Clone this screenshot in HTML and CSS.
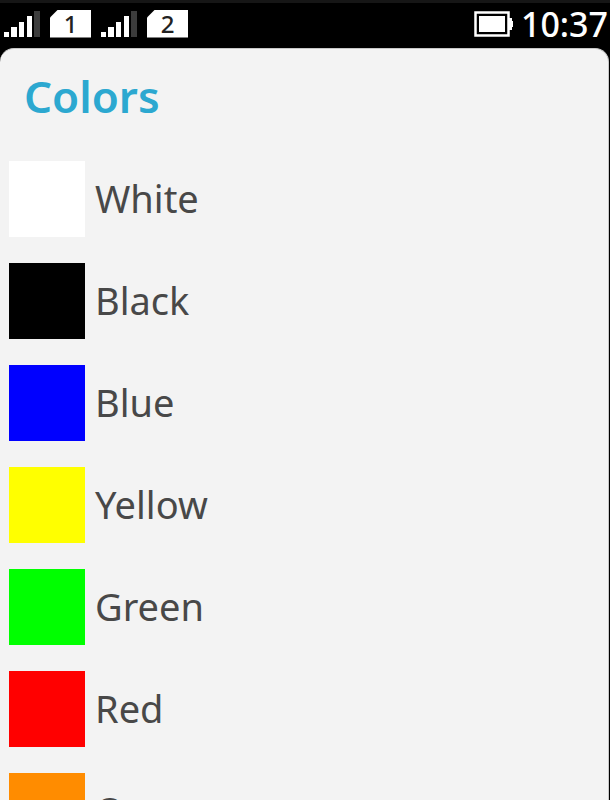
FILE: index.html
```html
<!DOCTYPE html>
<html lang="en">
<head>
  <meta charset="UTF-8">
  <meta name="viewport" content="width=device-width, initial-scale=1">
  <title>Colors</title>
  <link rel="stylesheet" href="styles.css">
</head>
<body>
  <header class="status-bar">
    <div class="sims">
      <svg class="signal" width="36" height="26" viewBox="0 0 36 26" aria-hidden="true">
        <path fill="#fff" d="M0 21h5v5H0zM7 16h6v10H7zM15 11h5v15h-5zM23 5h5v21h-5z"/>
        <path fill="#3c3c3c" d="M30 0h6v26h-6z"/>
      </svg>
      <span class="sim-badge">1</span>
      <svg class="signal" width="36" height="26" viewBox="0 0 36 26" aria-hidden="true">
        <path fill="#fff" d="M0 21h5v5H0zM7 16h6v10H7zM15 11h5v15h-5zM23 5h5v21h-5z"/>
        <path fill="#3c3c3c" d="M30 0h6v26h-6z"/>
      </svg>
      <span class="sim-badge">2</span>
    </div>
    <div class="system">
      <svg class="battery" width="39" height="26" viewBox="0 0 39 26" aria-hidden="true">
        <path fill="none" stroke="#fff" stroke-width="2.5" d="M1.5 1.5h33v23h-33z"/>
        <path fill="#fff" d="M5 5h26v16H5zM35 7h3v3h1v6h-1v3h-3z"/>
      </svg>
      <time class="clock">10:37</time>
    </div>
  </header>

  <main class="panel">
    <h1 class="title">Colors</h1>
    <ul class="color-list">
      <li class="color-item"><span class="swatch white"></span>White</li>
      <li class="color-item"><span class="swatch black"></span>Black</li>
      <li class="color-item"><span class="swatch blue"></span>Blue</li>
      <li class="color-item"><span class="swatch yellow"></span>Yellow</li>
      <li class="color-item"><span class="swatch green"></span>Green</li>
      <li class="color-item"><span class="swatch red"></span>Red</li>
      <li class="color-item"><span class="swatch orange"></span>Orange</li>
    </ul>
  </main>
</body>
</html>
```

FILE: styles.css
```css
:root {
  --panel-color: #f3f3f3;
  --title-color: #2ca8d0;
  --text-color: #484848;
}

* {
  margin: 0;
  padding: 0;
  box-sizing: border-box;
}

body {
  display: flex;
  flex-direction: column;
  height: 100vh;
  overflow: hidden;
  font-family: "Noto Sans", sans-serif;
  background-color: #000;
  color: var(--text-color);
}

.status-bar {
  display: flex;
  flex: none;
  justify-content: space-between;
  height: 48px;
  padding: 0 2px 4px 4px;
  border-top: 3px solid #161616;
  color: #fff;
}

.sims,
.system {
  display: flex;
  align-items: center;
}

.sims {
  gap: 10px;
}

.system {
  gap: 8px;
}

.sim-badge {
  width: 41px;
  height: 28px;
  background-color: #fff;
  color: #222;
  font-size: 24px;
  font-weight: 500;
  line-height: 28px;
  text-align: center;
  clip-path: polygon(8px 0, 100% 0, 100% 100%, 0 100%, 0 8px);
}

.clock {
  font-size: 34px;
  font-weight: 500;
  line-height: 40px;
}

.panel {
  flex: 1;
  min-height: 0;
  margin-right: 1px;
  overflow: hidden;
  border-top: 1px solid #c8c8c8;
  border-right: 1px solid #c8c8c8;
  border-radius: 14px 14px 0 0;
  background-color: var(--panel-color);
}

.title {
  padding: 15px 24px 33px;
  color: var(--title-color);
  font-size: 44px;
  font-weight: 600;
  line-height: 64px;
}

.color-list {
  display: flex;
  flex-direction: column;
  gap: 26px;
  padding-left: 9px;
  list-style: none;
}

.color-item {
  display: flex;
  flex: none;
  gap: 10px;
  font-size: 38px;
  line-height: 74px;
}

.swatch {
  width: 76px;
  height: 76px;
}

.white { background-color: #fff; }
.black { background-color: #000; }
.blue { background-color: #00f; }
.yellow { background-color: #ff0; }
.green { background-color: #0f0; }
.red { background-color: #f00; }
.orange { background-color: #ff8c00; }
```
